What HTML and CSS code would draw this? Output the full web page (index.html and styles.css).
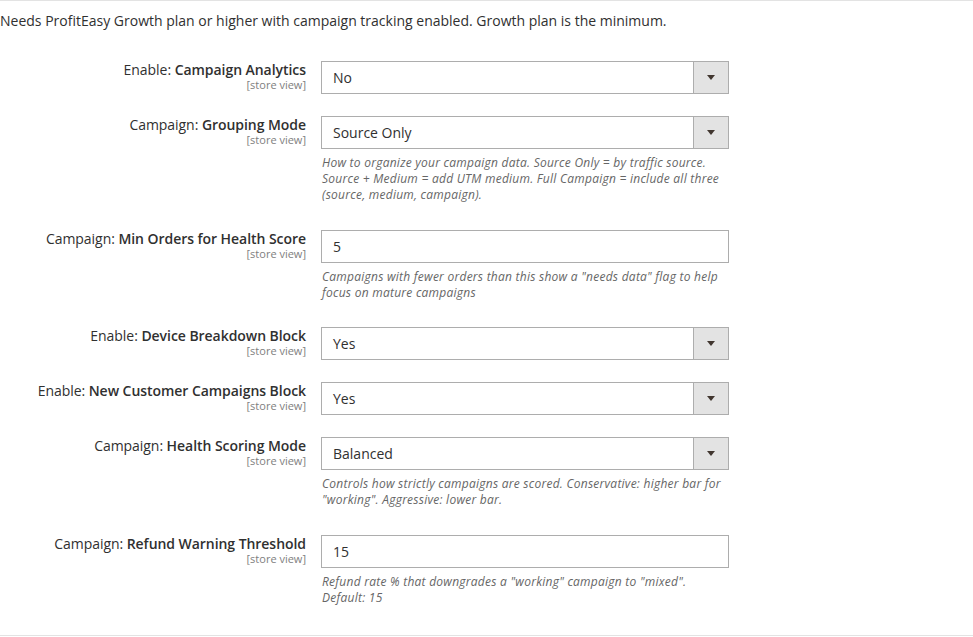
FILE: index.html
```html
<!DOCTYPE html>
<html lang="en">
<head>
<meta charset="utf-8">
<title>Campaign Analytics</title>
<link rel="stylesheet" href="styles.css">
</head>
<body>
<div class="section">
  <p class="comment">Needs ProfitEasy Growth plan or higher with campaign tracking enabled. Growth plan is the minimum.</p>
  <div class="rows">
    <div class="row">
      <div class="label"><span class="lbl">Enable: <b>Campaign Analytics</b></span><span class="scope">[store view]</span></div>
      <div class="value">
        <div class="select"><span class="sel-text">No</span><span class="sel-btn"><i class="arrow"></i></span></div>
      </div>
    </div>
    <div class="row">
      <div class="label"><span class="lbl">Campaign: <b>Grouping Mode</b></span><span class="scope">[store view]</span></div>
      <div class="value">
        <div class="select"><span class="sel-text">Source Only</span><span class="sel-btn"><i class="arrow"></i></span></div>
        <p class="note">How to organize your campaign data. Source Only = by traffic source. Source + Medium = add UTM medium. Full Campaign = include all three (source, medium, campaign).</p>
      </div>
    </div>
    <div class="row">
      <div class="label"><span class="lbl">Campaign: <b>Min Orders for Health Score</b></span><span class="scope">[store view]</span></div>
      <div class="value">
        <div class="input">5</div>
        <p class="note">Campaigns with fewer orders than this show a "needs data" flag to help focus on mature campaigns</p>
      </div>
    </div>
    <div class="row">
      <div class="label"><span class="lbl">Enable: <b>Device Breakdown Block</b></span><span class="scope">[store view]</span></div>
      <div class="value">
        <div class="select"><span class="sel-text">Yes</span><span class="sel-btn"><i class="arrow"></i></span></div>
      </div>
    </div>
    <div class="row">
      <div class="label"><span class="lbl">Enable: <b>New Customer Campaigns Block</b></span><span class="scope">[store view]</span></div>
      <div class="value">
        <div class="select"><span class="sel-text">Yes</span><span class="sel-btn"><i class="arrow"></i></span></div>
      </div>
    </div>
    <div class="row">
      <div class="label"><span class="lbl">Campaign: <b>Health Scoring Mode</b></span><span class="scope">[store view]</span></div>
      <div class="value">
        <div class="select"><span class="sel-text">Balanced</span><span class="sel-btn"><i class="arrow"></i></span></div>
        <p class="note">Controls how strictly campaigns are scored. Conservative: higher bar for "working". Aggressive: lower bar.</p>
      </div>
    </div>
    <div class="row">
      <div class="label"><span class="lbl">Campaign: <b>Refund Warning Threshold</b></span><span class="scope">[store view]</span></div>
      <div class="value">
        <div class="input">15</div>
        <p class="note">Refund rate % that downgrades a "working" campaign to "mixed". Default: 15</p>
      </div>
    </div>
  </div>
</div>
</body>
</html>
```
FILE: styles.css
```css
html, body {
  margin: 0;
  padding: 0;
  background: #ffffff;
}
body {
  font-family: "Open Sans", "Liberation Sans", Arial, sans-serif;
  color: #303030;
}
.section {
  border-top: 1px solid #e3e3e3;
  border-bottom: 1px solid #e3e3e3;
  height: 636px;
  box-sizing: border-box;
}
.comment {
  margin: 0;
  padding-top: 10px;
  font-size: 14px;
  line-height: 19px;
  height: 60px;
  box-sizing: border-box;
}
.rows {
  display: flex;
  flex-direction: column;
  gap: 22px;
}
.row {
  display: grid;
  grid-template-columns: 306px 408px;
  column-gap: 15px;
  align-items: start;
}
.label {
  display: flex;
  flex-direction: column;
  align-items: flex-end;
  text-align: right;
  padding-top: 1px;
}
.lbl {
  font-size: 14px;
  line-height: 16px;
  color: #303030;
  letter-spacing: -0.05px;
}
.lbl b {
  font-weight: 600;
}
.scope {
  font-size: 11px;
  line-height: 14px;
  color: #808080;
}
.select, .input {
  height: 33px;
  box-sizing: border-box;
  border: 1px solid #adadad;
  background: #ffffff;
  font-size: 14px;
  color: #303030;
}
.select {
  display: flex;
  align-items: stretch;
}
.sel-text {
  flex: 1;
  display: flex;
  align-items: center;
  padding-left: 11px;
}
.sel-btn {
  width: 34px;
  background: #e3e3e3;
  border-left: 1px solid #adadad;
  display: flex;
  align-items: center;
  justify-content: center;
}
.arrow {
  width: 0;
  height: 0;
  border-top: 5px solid #41362f;
  border-left: 4px solid transparent;
  border-right: 4px solid transparent;
}
.input {
  display: flex;
  align-items: center;
  padding-left: 11px;
}
.note {
  margin: 6px 0 4.5px;
  padding-left: 1px;
  font-size: 12px;
  line-height: 16px;
  font-style: italic;
  letter-spacing: 0.25px;
  color: #666666;
}
```
